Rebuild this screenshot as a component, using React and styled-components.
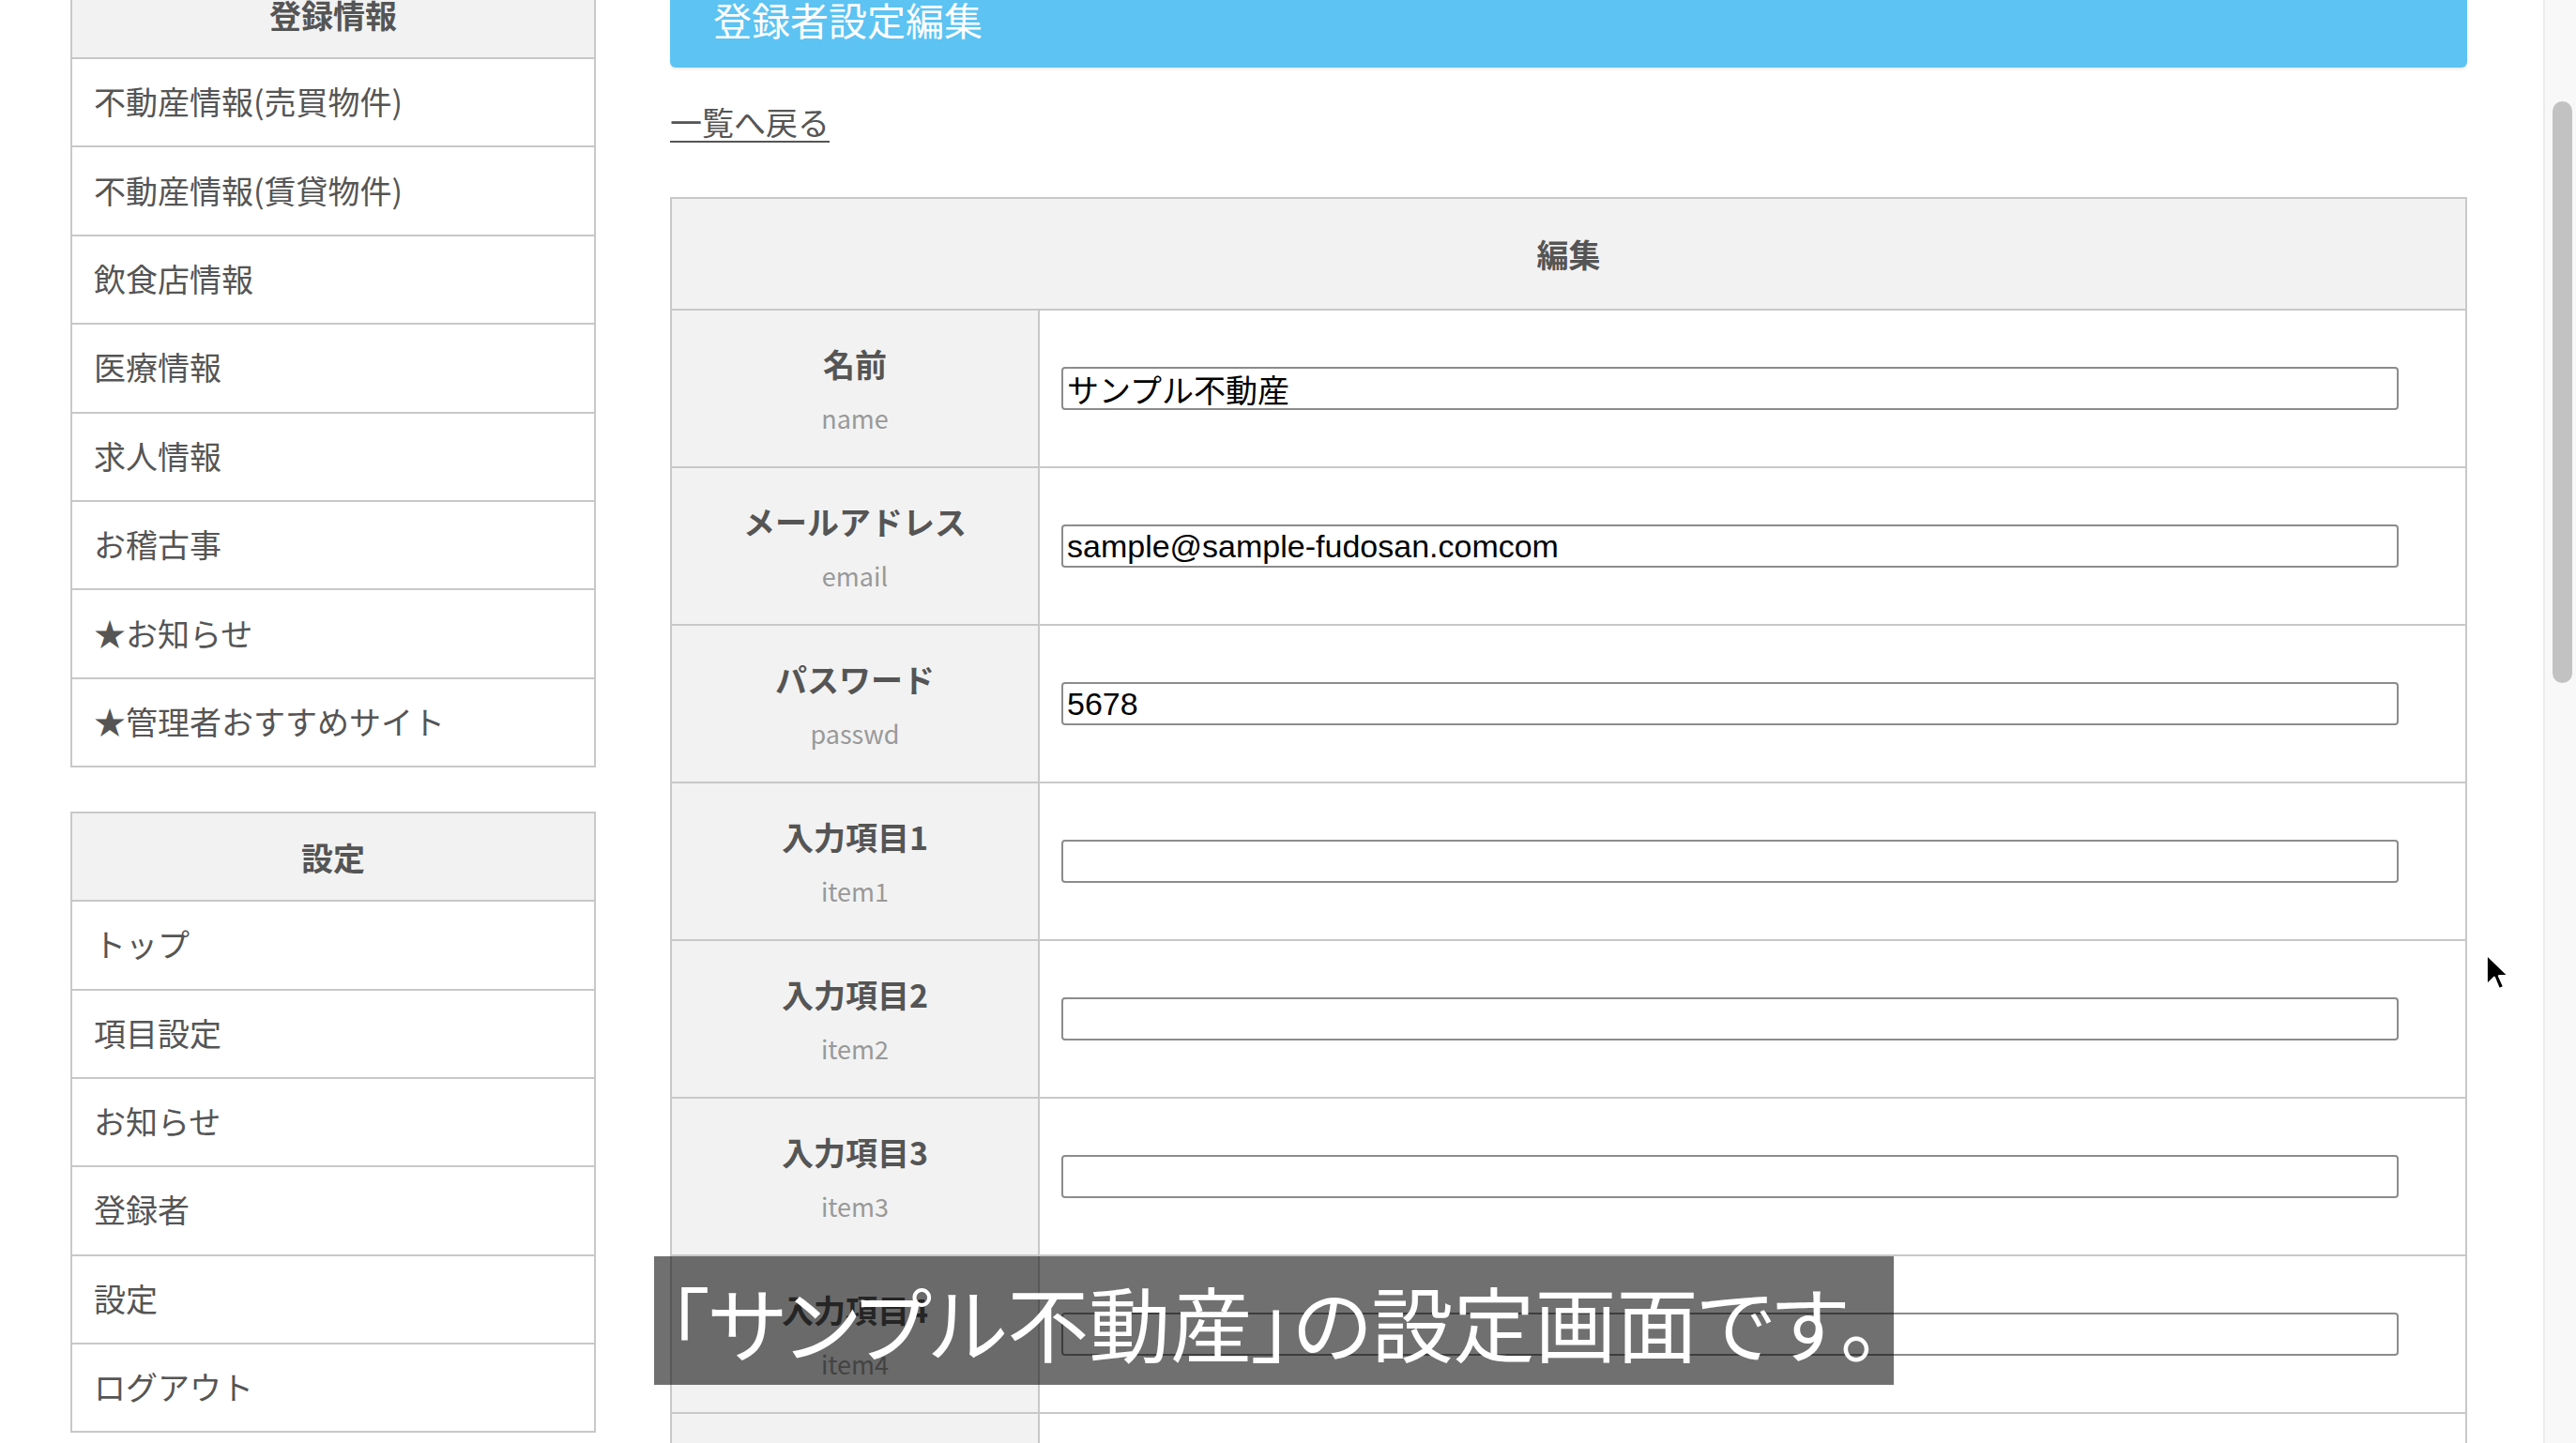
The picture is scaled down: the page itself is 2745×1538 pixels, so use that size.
import React from "react";
import styled, { createGlobalStyle } from "styled-components";

const Global = createGlobalStyle`
  html, body {
    margin: 0;
    padding: 0;
    overflow: hidden;
    background: #fff;
    font-family: "Noto Sans CJK JP", "Noto Sans", sans-serif;
    color: #555;
  }
  * { box-sizing: border-box; }
`;

const Screen = styled.div`
  position: relative;
  width: 2745px;
  height: 1538px;
  overflow: hidden;
`;

const Page = styled.div`
  display: flex;
  align-items: flex-start;
  gap: 79px;
  padding-left: 75px;
  margin-top: -33px;
`;

const Sidebar = styled.nav`
  width: 560px;
  display: flex;
  flex-direction: column;
  gap: 47px;
`;

const MenuBox = styled.div`
  border: 2px solid #c8c8c8;
  background: #fff;
`;

const MenuHead = styled.div`
  height: 92px;
  display: flex;
  align-items: center;
  justify-content: center;
  background: #f2f2f2;
  font-size: 34px;
  font-weight: 700;
  color: #555;
`;

const MenuItem = styled.a`
  display: flex;
  align-items: center;
  height: 94.4px;
  padding-left: 23px;
  padding-bottom: 3px;
  border-top: 2px solid #c8c8c8;
  font-size: 34px;
  color: #555;
  text-decoration: none;
`;

const Main = styled.main`
  width: 1915px;
  display: flex;
  flex-direction: column;
  align-items: flex-start;
`;

const TitleBar = styled.h1`
  margin: 0;
  width: 100%;
  height: 105px;
  display: flex;
  align-items: center;
  padding-left: 46px;
  background: #5cc3f2;
  border-radius: 0 0 6px 6px;
  box-shadow: 0 2px 3px rgba(0, 0, 0, 0.08);
  color: #fff;
  font-size: 41px;
  font-weight: 400;
`;

const BackLink = styled.a`
  margin-top: 32px;
  font-size: 34px;
  line-height: 51px;
  color: #555;
  text-decoration: underline;
  text-underline-offset: 6px;
  text-decoration-thickness: 2px;
`;

const EditTable = styled.table`
  margin-top: 55px;
  width: 100%;
  table-layout: fixed;
  border-collapse: collapse;
  border: 2px solid #c8c8c8;
`;

const LabelCol = styled.col`
  width: 392px;
`;

const HeadCell = styled.th`
  height: 119px;
  background: #f2f2f2;
  border: 2px solid #c8c8c8;
  font-size: 34px;
  font-weight: 700;
  color: #555;
`;

const LabelCell = styled.th`
  height: 168px;
  background: #f2f2f2;
  border: 2px solid #c8c8c8;
  text-align: center;
  vertical-align: middle;
  padding: 0;
`;

const Label = styled.div`
  font-size: 34px;
  line-height: 51px;
  font-weight: 700;
  color: #555;
`;

const SubLabel = styled.div`
  margin-top: 13px;
  font-size: 27px;
  line-height: 40px;
  font-weight: 400;
  color: #999;
`;

const FieldCell = styled.td`
  border: 2px solid #c8c8c8;
  padding: 0 0 0 23px;
  vertical-align: middle;
`;

const Field = styled.input`
  display: block;
  width: 1425px;
  height: 46px;
  padding: 0 4px;
  border: 2px solid #8c8c8c;
  border-radius: 4px;
  font-family: "Liberation Sans", "Noto Sans CJK JP", sans-serif;
  font-size: 34px;
  color: #000;
  background: #fff;
`;

const Scrollbar = styled.div`
  position: absolute;
  top: 0;
  right: 0;
  width: 35px;
  height: 100%;
  background: #f8f8f8;
  border-left: 2px solid #ececec;
`;

const Thumb = styled.div`
  position: absolute;
  top: 108px;
  left: 8px;
  width: 21px;
  height: 620px;
  border-radius: 11px;
  background: #c2c2c2;
`;

const Caption = styled.div`
  position: absolute;
  left: 697px;
  top: 1339px;
  width: 1321px;
  height: 137px;
  display: flex;
  align-items: center;
  justify-content: center;
  background: rgba(0, 0, 0, 0.56);
  color: #fff;
  font-size: 87px;
  font-weight: 400;
  font-feature-settings: "palt";
  white-space: nowrap;
`;

const Cursor = styled.svg`
  position: absolute;
  left: 2648px;
  top: 1016px;
  width: 30px;
  height: 44px;
`;

const registerMenu = [
  "不動産情報(売買物件)",
  "不動産情報(賃貸物件)",
  "飲食店情報",
  "医療情報",
  "求人情報",
  "お稽古事",
  "★お知らせ",
  "★管理者おすすめサイト",
];

const settingMenu = ["トップ", "項目設定", "お知らせ", "登録者", "設定", "ログアウト"];

const fields = [
  { label: "名前", key: "name", value: "サンプル不動産" },
  { label: "メールアドレス", key: "email", value: "sample@sample-fudosan.comcom" },
  { label: "パスワード", key: "passwd", value: "5678" },
  { label: "入力項目1", key: "item1", value: "" },
  { label: "入力項目2", key: "item2", value: "" },
  { label: "入力項目3", key: "item3", value: "" },
  { label: "入力項目4", key: "item4", value: "" },
  { label: "入力項目5", key: "item5", value: "" },
];

export default function App() {
  return (
    <>
      <Global />
      <Screen>
        <Page>
          <Sidebar>
            <MenuBox>
              <MenuHead>登録情報</MenuHead>
              {registerMenu.map((m) => (
                <MenuItem key={m}>{m}</MenuItem>
              ))}
            </MenuBox>
            <MenuBox>
              <MenuHead>設定</MenuHead>
              {settingMenu.map((m) => (
                <MenuItem key={m}>{m}</MenuItem>
              ))}
            </MenuBox>
          </Sidebar>

          <Main>
            <TitleBar>登録者設定編集</TitleBar>
            <BackLink href="#">一覧へ戻る</BackLink>
            <EditTable>
              <colgroup>
                <LabelCol />
                <col />
              </colgroup>
              <thead>
                <tr>
                  <HeadCell colSpan={2}>編集</HeadCell>
                </tr>
              </thead>
              <tbody>
                {fields.map((f) => (
                  <tr key={f.key}>
                    <LabelCell>
                      <Label>{f.label}</Label>
                      <SubLabel>{f.key}</SubLabel>
                    </LabelCell>
                    <FieldCell>
                      <Field type="text" defaultValue={f.value} />
                    </FieldCell>
                  </tr>
                ))}
              </tbody>
            </EditTable>
          </Main>
        </Page>

        <Scrollbar>
          <Thumb />
        </Scrollbar>

        <Caption>「サンプル不動産」の設定画面です。</Caption>

        <Cursor viewBox="0 0 20 30">
          <path
            d="M1 1 L1 23 L6.5 17.5 L10 26 L13.5 24.5 L10 16.5 L17 16.5 Z"
            fill="#000"
            stroke="#fff"
            strokeWidth="1.5"
            strokeLinejoin="round"
          />
        </Cursor>
      </Screen>
    </>
  );
}
